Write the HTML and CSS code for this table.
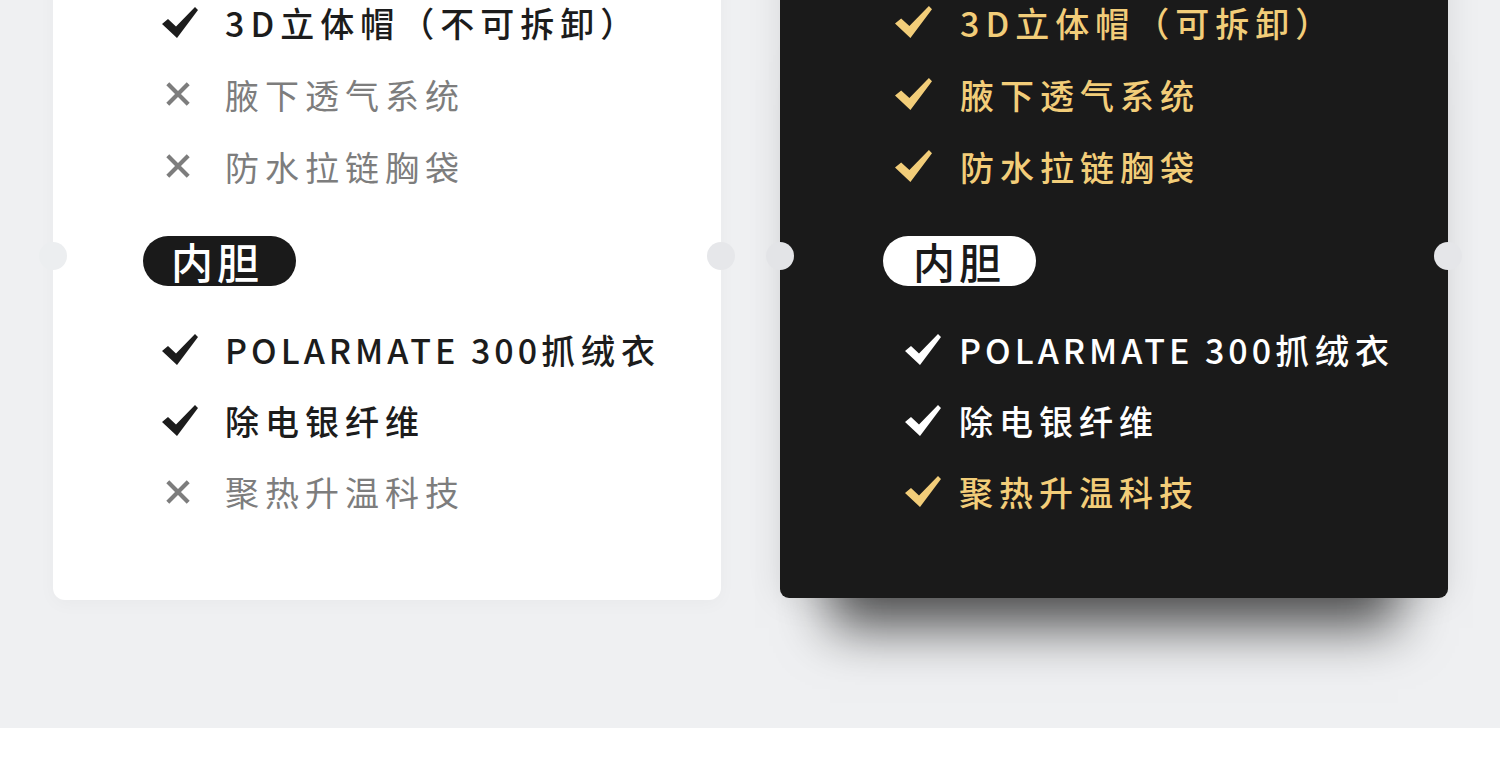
FILE: index.html
```html
<!DOCTYPE html>
<html lang="zh-CN">
<head>
<meta charset="utf-8">
<title>对比</title>
<link rel="stylesheet" href="styles.css">
</head>
<body>
<section class="compare">
  <div class="card card-light">
    <ul class="list">
      <li class="item on"><svg class="ico-check" viewBox="0 0 36 31"><path d="M0 17 L6 12 L14 19.5 L33 0 L36 3 L15 31 Z"/></svg><span>3D立体帽（不可拆卸）</span></li>
      <li class="item off"><svg class="ico-cross" viewBox="0 0 28 28"><path d="M3 3 L25 25 M25 3 L3 25"/></svg><span>腋下透气系统</span></li>
      <li class="item off"><svg class="ico-cross" viewBox="0 0 28 28"><path d="M3 3 L25 25 M25 3 L3 25"/></svg><span>防水拉链胸袋</span></li>
    </ul>
    <div class="badge badge-dark">内胆</div>
    <ul class="list list-b">
      <li class="item on"><svg class="ico-check" viewBox="0 0 36 31"><path d="M0 17 L6 12 L14 19.5 L33 0 L36 3 L15 31 Z"/></svg><span><span class="latin">POLARMATE 300</span>抓绒衣</span></li>
      <li class="item on"><svg class="ico-check" viewBox="0 0 36 31"><path d="M0 17 L6 12 L14 19.5 L33 0 L36 3 L15 31 Z"/></svg><span>除电银纤维</span></li>
      <li class="item off"><svg class="ico-cross" viewBox="0 0 28 28"><path d="M3 3 L25 25 M25 3 L3 25"/></svg><span>聚热升温科技</span></li>
    </ul>
  </div>
  <div class="card card-dark">
    <ul class="list">
      <li class="item gold"><svg class="ico-check big" viewBox="0 0 36 31"><path d="M0 17 L6 12 L14 19.5 L33 0 L36 3 L15 31 Z"/></svg><span>3D立体帽（可拆卸）</span></li>
      <li class="item gold"><svg class="ico-check big" viewBox="0 0 36 31"><path d="M0 17 L6 12 L14 19.5 L33 0 L36 3 L15 31 Z"/></svg><span>腋下透气系统</span></li>
      <li class="item gold"><svg class="ico-check big" viewBox="0 0 36 31"><path d="M0 17 L6 12 L14 19.5 L33 0 L36 3 L15 31 Z"/></svg><span>防水拉链胸袋</span></li>
    </ul>
    <div class="badge badge-light">内胆</div>
    <ul class="list list-b shifted">
      <li class="item white"><svg class="ico-check" viewBox="0 0 36 31"><path d="M0 17 L6 12 L14 19.5 L33 0 L36 3 L15 31 Z"/></svg><span><span class="latin">POLARMATE 300</span>抓绒衣</span></li>
      <li class="item white"><svg class="ico-check" viewBox="0 0 36 31"><path d="M0 17 L6 12 L14 19.5 L33 0 L36 3 L15 31 Z"/></svg><span>除电银纤维</span></li>
      <li class="item gold"><svg class="ico-check" viewBox="0 0 36 31"><path d="M0 17 L6 12 L14 19.5 L33 0 L36 3 L15 31 Z"/></svg><span>聚热升温科技</span></li>
    </ul>
  </div>
</section>
<div class="footer-space"></div>
</body>
</html>
```
FILE: styles.css
```css
* { box-sizing: border-box; }
html, body { margin: 0; padding: 0; background: #ffffff; }
body {
  font-family: "Noto Sans CJK SC", "Noto Sans", sans-serif;
  overflow: hidden;
}
.compare {
  height: 728px;
  background: #eff0f2;
  display: flex;
  align-items: flex-start;
  gap: 59px;
  padding-left: 53px;
  overflow: hidden;
}
.card {
  position: relative;
  width: 668px;
  margin-top: -50px;
  padding-top: 0;
}
.card-light {
  background: #ffffff;
  height: 650px;
  border-radius: 0 0 12px 12px;
  padding-left: 109px;
  box-shadow: 0 4px 18px rgba(0, 0, 0, 0.03);
}
.card-dark {
  background: #1a1a1a;
  height: 648px;
  border-radius: 0 0 9px 9px;
  padding-left: 115px;
  box-shadow: 0 0 34px rgba(0, 0, 0, 0.10), 0 80px 50px -50px rgba(0, 0, 0, 0.65);
}
.card::before, .card::after {
  content: "";
  position: absolute;
  top: 292px;
  width: 28px;
  height: 28px;
  border-radius: 50%;
  background: #eceef0;
}
.card::before { left: -14px; }
.card::after { right: -14px; }
.card-light::after { background: #e6e7ea; }
.card-dark::before { background: #e3e4e7; }
.card-dark::after { background: #e5e6e9; }

.list {
  list-style: none;
  margin: 0;
  padding: 36px 0 0 0;
}
.list-b { padding-top: 28px; }
.item {
  display: flex;
  align-items: center;
  height: 72px;
  font-size: 34px;
  letter-spacing: 6px;
  font-weight: 500;
}
.latin { letter-spacing: 4px; }
.list-b .item { height: 71px; }
.item svg { flex: none; }
.ico-check {
  width: 36px;
  height: 31px;
  margin-right: 27px;
  fill: currentColor;
}
.ico-check.big {
  width: 37px;
  height: 32px;
  margin-right: 28px;
}
.ico-cross {
  width: 26px;
  height: 26px;
  margin-left: 3px;
  margin-right: 34px;
  fill: none;
  stroke: currentColor;
  stroke-width: 4.5;
}
.on { color: #1c1c1c; }
.off { color: #7d7d7d; font-weight: 400; }
.gold { color: #f2cd79; }
.white { color: #ffffff; }
.shifted { padding-left: 10px; }
.shifted .ico-check { margin-right: 18px; }

.badge {
  display: inline-flex;
  align-items: center;
  height: 50px;
  width: 153px;
  border-radius: 25px;
  font-size: 42px;
  font-weight: 500;
  letter-spacing: 4px;
  padding-left: 28px;
  margin-top: 34px;
  line-height: 1;
}
.badge-dark {
  background: #1a1a1a;
  color: #ffffff;
  margin-left: -19px;
}
.badge-light {
  background: #ffffff;
  color: #1a1a1a;
  margin-left: -12px;
  padding-left: 30px;
}
.footer-space {
  height: 41px;
  background: #ffffff;
}
```
